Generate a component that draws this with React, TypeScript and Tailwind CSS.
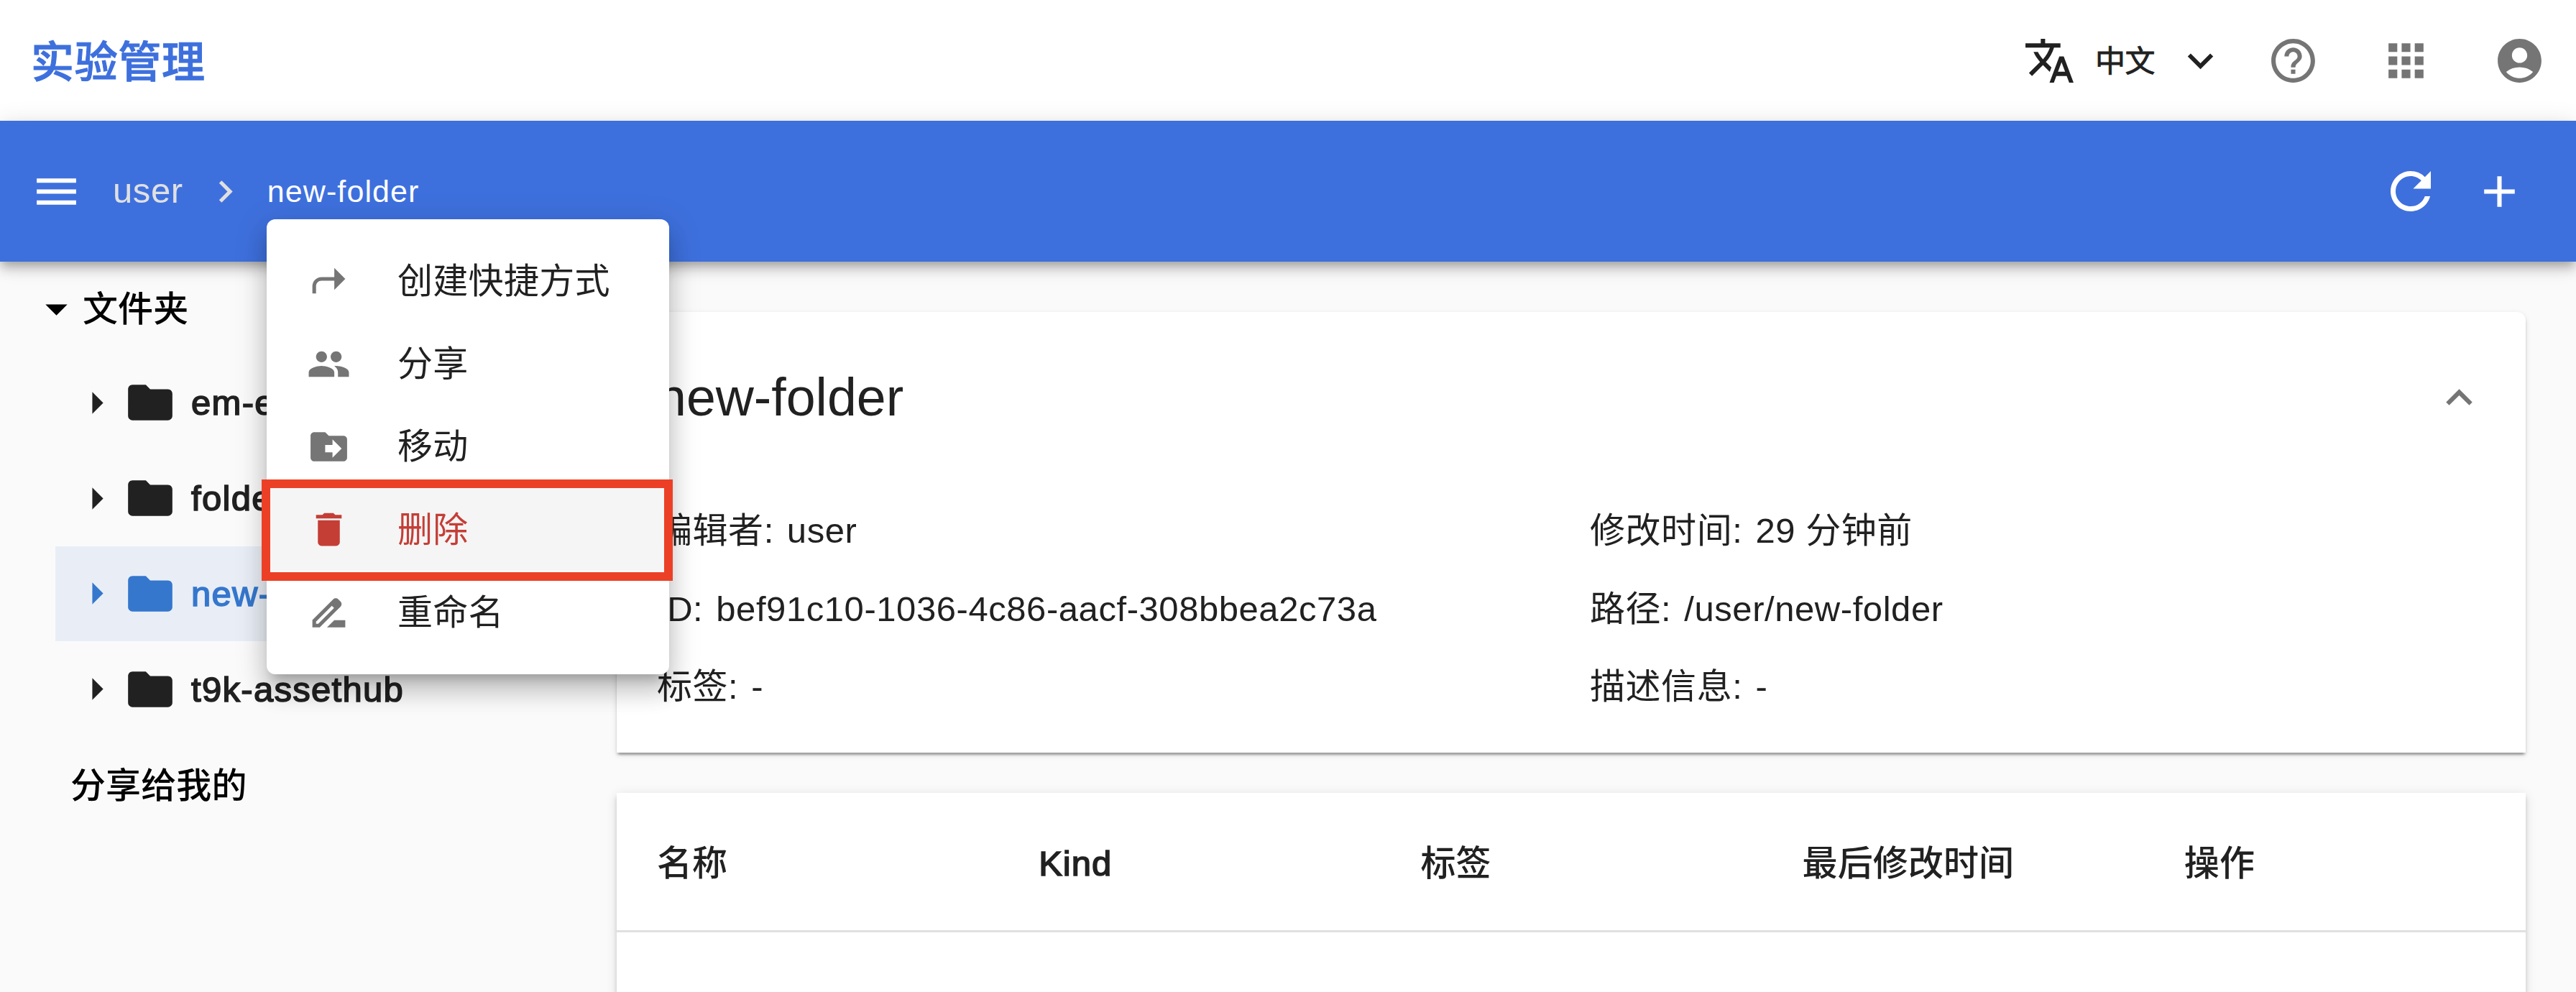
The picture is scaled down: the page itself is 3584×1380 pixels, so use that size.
import React from "react";
import {
  MdTranslate, MdExpandMore, MdHelpOutline, MdApps, MdAccountCircle, MdMenu, MdNavigateNext,
  MdRefresh, MdAdd, MdFolder, MdArrowRight, MdArrowDropDown, MdExpandLess, MdShortcut, MdPeople,
  MdDriveFileMove, MdDelete, MdDriveFileRenameOutline,
} from "react-icons/md";

const folders = [
  { name: "em-examples" },
  { name: "folder" },
  { name: "new-folder", selected: true },
  { name: "t9k-assethub" },
];

const menuItems = [
  { icon: MdShortcut, label: "创建快捷方式" },
  { icon: MdPeople, label: "分享" },
  { icon: MdDriveFileMove, label: "移动" },
  { icon: MdDelete, label: "删除", danger: true },
  { icon: MdDriveFileRenameOutline, label: "重命名" },
];

const details = [
  ["编辑者:", "user"],
  ["修改时间:", "29 分钟前"],
  ["ID:", "bef91c10-1036-4c86-aacf-308bbea2c73a"],
  ["路径:", "/user/new-folder"],
  ["标签:", "-"],
  ["描述信息:", "-"],
];

const columns = ["名称", "Kind", "标签", "最后修改时间", "操作"];

function Header() {
  return (
    <header className="flex h-[168px] shrink-0 items-center bg-white pl-[43px] pr-[42px]">
      <h1 className="pt-[8px] text-[60px] leading-[84px] font-medium tracking-[0.7px] text-[#3e70dd] [-webkit-text-stroke:1px_#3e70dd]">实验管理</h1>
      <div className="ml-auto flex items-center">
        <MdTranslate className="size-[73px] text-[#212121]" />
        <span className="ml-[27px] pt-[3px] text-[42px] leading-[60px] -tracking-[0.5px] text-[#212121] [-webkit-text-stroke:0.8px_#212121]">中文</span>
        <MdExpandMore className="ml-[28px] size-[71px] text-[#212121]" />
        <MdHelpOutline className="ml-[57px] size-[73px] text-[#757575]" />
        <MdApps className="ml-[84px] size-[73px] text-[#757575]" />
        <MdAccountCircle className="ml-[85px] size-[73px] text-[#757575]" />
      </div>
    </header>
  );
}

function Toolbar() {
  return (
    <nav className="relative z-10 flex h-[196px] shrink-0 items-center bg-[#3e70dd] pl-[42px] pr-[70px] text-white shadow-[0_6px_12px_-3px_rgba(0,0,0,0.2),0_12px_15px_0_rgba(0,0,0,0.14),0_3px_31px_0_rgba(0,0,0,0.12)]">
      <MdMenu className="size-[73px]" />
      <span className="ml-[42px] pb-[2px] text-[49px] leading-[70px] tracking-[0.6px] text-[#e0e0e0]">user</span>
      <MdNavigateNext className="ml-[28px] size-[61px] text-[#e0e0e0]" />
      <span className="ml-[28px] text-[43px] leading-[70px] tracking-[1.1px]">new-folder</span>
      <MdRefresh className="ml-auto size-[84px]" />
      <MdAdd className="ml-[45px] size-[73px]" />
      <ContextMenu />
    </nav>
  );
}

function ContextMenu() {
  return (
    <div className="absolute top-[137px] left-[371px] h-[633px] w-[560px] rounded-[12px] bg-white pt-[27px] text-[#212121] shadow-[0_15px_15px_-9px_rgba(0,0,0,0.2),0_25px_31px_3px_rgba(0,0,0,0.14),0_9px_43px_6px_rgba(0,0,0,0.12)]">
      {menuItems.map(({ icon: Icon, label, danger }) => (
        <div
          key={label}
          className={`relative flex h-[115.4px] items-center pl-[56px] ${danger ? "bg-[#f5f5f5] text-[#c43e36]" : ""}`}
        >
          <Icon className={`mt-[2px] size-[61px] ${danger ? "" : "text-[#757575]"}`} />
          <span className="ml-[65px] pt-[2px] text-[49px] leading-[70px] tracking-[0.3px]">{label}</span>
          {danger && <div className="absolute -top-[11px] -left-[7px] h-[141px] w-[572px] border-[12px] border-[#ec4026]" />}
        </div>
      ))}
    </div>
  );
}

function Sidebar() {
  return (
    <aside className="w-[858px] shrink-0 text-[49px] leading-[70px] tracking-[0.1px]">
      <div className="flex h-[130px] items-center pl-[42px] text-black">
        <MdArrowDropDown className="size-[73px]" />
        <span className="pt-[2px] font-medium">文件夹</span>
      </div>
      {folders.map(({ name, selected }) => (
        <div
          key={name}
          className={`ml-[77px] mr-[25px] flex h-[132.8px] items-center pl-[21px] ${selected ? "bg-[#e9eef6] text-[#3577cd]" : "text-[#212121]"}`}
        >
          <MdArrowRight className="size-[73px]" />
          <MdFolder className="ml-px size-[74px]" />
          <span className="ml-[20px] tracking-[1.3px] [-webkit-text-stroke:1.6px_currentColor]">{name}</span>
        </div>
      ))}
      <div className="flex h-[132px] items-center pt-[3px] pl-[98px] font-medium text-black">分享给我的</div>
    </aside>
  );
}

function DetailsCard() {
  return (
    <section className="h-[613px] rounded-t-[12px] bg-white pl-[56px] pr-[56px] pt-[69px] shadow-[0_6px_3px_-3px_rgba(0,0,0,0.2),0_3px_3px_0_rgba(0,0,0,0.14),0_3px_9px_0_rgba(0,0,0,0.12)]">
      <div className="flex h-[100px] items-center justify-between">
        <h2 className="text-[73.5px] leading-[100px]">new-folder</h2>
        <MdExpandLess className="size-[73px] text-[#757575]" />
      </div>
      <dl className="mt-[81px] grid grid-cols-[1298px_1fr] text-[49px] tracking-[0.56px]">
        {details.map(([label, value]) => (
          <div key={label} className="flex h-[108.5px] items-center gap-[18px] leading-[70px]">
            <dt>{label}</dt>
            <dd>{value}</dd>
          </div>
        ))}
      </dl>
    </section>
  );
}

function AssetTable() {
  return (
    <section className="mt-[56px] h-[400px] bg-white shadow-[0_9px_3px_-6px_rgba(0,0,0,0.2),0_6px_6px_0_rgba(0,0,0,0.14),0_3px_15px_0_rgba(0,0,0,0.12)]">
      <div className="grid h-[194px] grid-cols-5 items-center border-b-[3px] border-[#e0e0e0] pt-[4px] text-[49px] leading-[70px] tracking-[0.1px]">
        {columns.map((c) => (
          <div key={c} className={c === "Kind" ? "pl-[56px] tracking-[1px] [-webkit-text-stroke:1.6px_#212121]" : "pl-[56px] font-medium"}>{c}</div>
        ))}
      </div>
    </section>
  );
}

export default function App() {
  return (
    <div className="flex h-[1380px] w-[3584px] flex-col overflow-hidden bg-[#fafafa] font-['Liberation_Sans','Noto_Sans_CJK_SC',sans-serif] text-[#212121]" lang="zh-CN">
      <Header />
      <Toolbar />
      <div className="flex min-h-0 flex-1">
        <Sidebar />
        <main className="w-[2656px] shrink-0 pt-[70px]">
          <DetailsCard />
          <AssetTable />
        </main>
      </div>
    </div>
  );
}
